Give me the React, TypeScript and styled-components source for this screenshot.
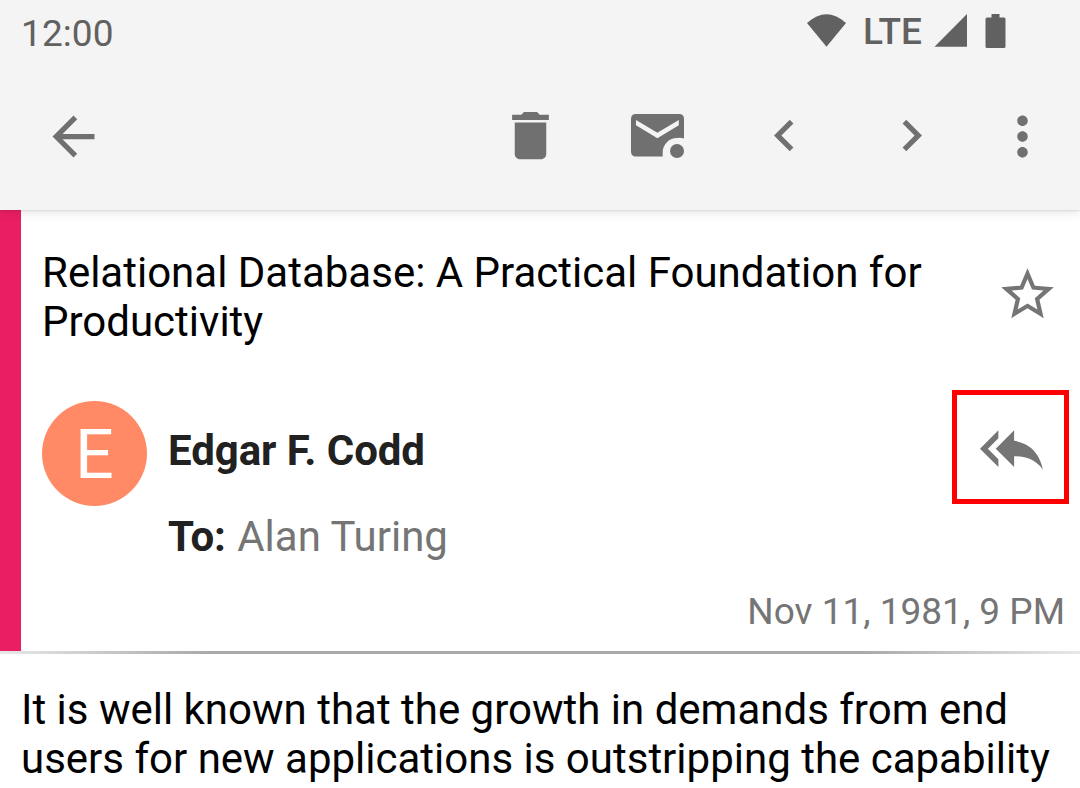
import React from 'react';
import styled, { createGlobalStyle } from 'styled-components';

const GlobalStyle = createGlobalStyle`
  * { box-sizing: border-box; }
  body {
    margin: 0;
    background: #fff;
    font-family: Roboto, 'Liberation Sans', sans-serif;
    font-size: 42px;
    line-height: 49px;
    color: #000;
  }
`;

const Screen = styled.div`
  width: 1080px;
  height: 788px;
  overflow: hidden;
  background: #fff;
`;

const TopBar = styled.header`
  position: relative;
  height: 210px;
  background: #f4f4f4;
  box-shadow: 0 1px 2px rgba(0, 0, 0, 0.1), 0 3px 10px rgba(0, 0, 0, 0.09);
`;

const StatusBar = styled.div`
  display: flex;
  justify-content: space-between;
  height: 63px;
  padding: 0 74px 0 21px;
  font-size: 37px;
  line-height: 43px;
  color: #616161;
`;

const Clock = styled.span`
  padding-top: 12px;
  letter-spacing: 0.1px;
`;

const StatusIcons = styled.div`
  display: flex;
  align-items: flex-start;
  padding-top: 10px;
`;

const Network = styled.span`
  width: 60px;
  margin: 0 11px 0 15px;
  font-weight: 500;
`;

const StatusGlyph = styled.svg<{ $gap?: number }>`
  display: block;
  flex: none;
  margin-top: 3px;
  margin-left: ${({ $gap = 0 }) => $gap}px;
  fill: #616161;
`;

const Toolbar = styled.nav`
  display: flex;
  padding: 42px 26px 0 42px;
`;

const Actions = styled.div`
  display: flex;
  gap: 64px;
  margin-left: auto;
`;

const IconButton = styled.button<{ $pull?: number }>`
  flex: none;
  width: 63px;
  height: 63px;
  padding: 0;
  border: 0;
  margin-left: ${({ $pull = 0 }) => -$pull}px;
  background: none;
  color: #707070;
`;

const Glyph = styled.svg`
  display: block;
  width: 63px;
  height: 63px;
  fill: currentColor;
`;

const MessageHeader = styled.section`
  display: flex;
  flex-direction: column;
  height: 441px;
  border-left: 21px solid #e91e63;
  padding: 38px 0 0 21px;
`;

const SubjectRow = styled.div`
  display: flex;
  justify-content: space-between;
  padding-right: 21px;
`;

const Subject = styled.h1`
  width: 900px;
  margin: 0;
  font-size: 42px;
  font-weight: 400;
  line-height: 49px;
`;

const StarButton = styled(IconButton)`
  margin-top: 15px;
  color: #757575;
`;

const SenderRow = styled.div`
  display: flex;
  margin-top: 44px;
  padding-right: 11px;
`;

const Avatar = styled.div`
  width: 105px;
  height: 105px;
  margin-top: 11px;
  border-radius: 50%;
  background: #ff8a65;
  color: #fff;
  font-size: 68.25px;
  line-height: 108px;
  text-align: center;
`;

const People = styled.div`
  display: flex;
  flex-direction: column;
  gap: 37px;
  margin: 36px auto 0 21px;
  color: #757575;
`;

const Strong = styled.strong`
  font-weight: 700;
  letter-spacing: -0.08px;
  color: #212121;
`;

const Recipient = styled.span`
  margin-left: 1px;
`;

const ReplyAllButton = styled.button`
  display: flex;
  justify-content: center;
  width: 117px;
  height: 114px;
  padding: 22px 0 0 1px;
  border: 5px solid #f00;
  background: none;
  color: #757575;
`;

const Timestamp = styled.time`
  margin: 29px 15px 0 0;
  font-size: 37px;
  line-height: 43px;
  color: #757575;
  text-align: right;
`;

const Divider = styled.div`
  height: 3px;
  background: linear-gradient(90deg, #e8e8e8, #aaa 19%, #aaa 80%, #e8e8e8);
`;

const Body = styled.p`
  margin: 31px 0 0;
  padding: 0 21px;
`;

const Icon = ({ d, dx = 0, dy = 0 }: { d: string; dx?: number; dy?: number }) => (
  <Glyph viewBox="0 0 63 63">
    <path d={d} transform={`translate(${dx} ${dy}) scale(2.625)`} />
  </Glyph>
);

const paths = {
  back: 'M20 11H7.83l5.59-5.59L12 4l-8 8 8 8 1.41-1.41L7.83 13H20v-2z',
  trash:
    'M6 19c0 1.1.9 2 2 2h8c1.1 0 2-.9 2-2V7H6v12zM19 4h-3.5l-1-1h-5l-1 1H5v2h14V4z',
  prev: 'M15.41 7.41L14 6l-6 6 6 6 1.41-1.41L10.83 12z',
  next: 'M10 6L8.59 7.41 13.17 12l-4.58 4.59L10 18l6-6z',
  more: 'M12 8c1.1 0 2-.9 2-2s-.9-2-2-2-2 .9-2 2 .9 2 2 2zm0 2c-1.1 0-2 .9-2 2s.9 2 2 2 2-.9 2-2-.9-2-2-2zm0 6c-1.1 0-2 .9-2 2s.9 2 2 2 2-.9 2-2-.9-2-2-2z',
  star: 'M22 9.24l-7.19-.62L12 2 9.19 8.63 2 9.24l5.46 4.73L5.82 21 12 17.27 18.18 21l-1.63-7.03L22 9.24zM12 15.4l-3.76 2.27 1-4.28-3.32-2.88 4.38-.38L12 6.1l1.71 4.04 4.38.38-3.32 2.88 1 4.28L12 15.4z',
  replyAll:
    'M7 8V5l-7 7 7 7v-3l-4-4 4-4zm6-1V5l-7 7 7 7v-4.1c5 0 8.5 1.6 11 5.1-1-5-4-10-11-11z',
};

const MarkUnreadIcon = () => (
  <Glyph viewBox="0 0 63 63">
    <path d="M10 9H53Q58 9 58 14V33.5Q54.5 32.4 51 33A14.3 14.3 0 0 0 36.7 47.3V51.5H10Q5 51.5 5 46.500V14Q5 9 10 9ZM10 15V20.300L31.400 33.200L52.800 20.300V15L31.400 27.800Z" />
    <circle cx="51" cy="46" r="7" />
  </Glyph>
);

export default function App() {
  return (
    <Screen>
      <GlobalStyle />
      <TopBar>
        <StatusBar>
          <Clock>12:00</Clock>
          <StatusIcons>
            <StatusGlyph width="42" height="36" viewBox="0 0 42 36">
              <path d="M1 10Q20.500 -7.500 40 10L20.500 33.700Z" />
            </StatusGlyph>
            <Network>LTE</Network>
            <StatusGlyph width="34" height="36" viewBox="0 0 34 36">
              <path d="M0.500 33.700L33 1V33.700Z" />
            </StatusGlyph>
            <StatusGlyph $gap={17} width="21" height="36" viewBox="0 0 21 36">
              <path d="M6.500 1H14.500V4.500H19Q20.500 4.500 20.500 6V33.500Q20.500 35 19 35H2Q0.500 35 0.500 33.500V6Q0.500 4.500 2 4.500H6.500Z" />
            </StatusGlyph>
          </StatusIcons>
        </StatusBar>
        <Toolbar>
          <IconButton aria-label="Back">
            <Icon d={paths.back} />
          </IconButton>
          <Actions>
            <IconButton aria-label="Delete">
              <Icon d={paths.trash} dy={-0.8} />
            </IconButton>
            <IconButton aria-label="Mark unread">
              <MarkUnreadIcon />
            </IconButton>
            <IconButton aria-label="Previous">
              <Icon d={paths.prev} dy={-1} />
            </IconButton>
            <IconButton aria-label="Next">
              <Icon d={paths.next} dy={-1} />
            </IconButton>
            <IconButton aria-label="More" $pull={16}>
              <Icon d={paths.more} />
            </IconButton>
          </Actions>
        </Toolbar>
      </TopBar>
      <MessageHeader>
        <SubjectRow>
          <Subject>Relational Database: A Practical Foundation for Productivity</Subject>
          <StarButton aria-label="Star">
            <Icon d={paths.star} />
          </StarButton>
        </SubjectRow>
        <SenderRow>
          <Avatar>E</Avatar>
          <People>
            <Strong>Edgar F. Codd</Strong>
            <span>
              <Strong>To:</Strong> <Recipient>Alan Turing</Recipient>
            </span>
          </People>
          <ReplyAllButton aria-label="Reply all">
            <Icon d={paths.replyAll} dy={0.2} />
          </ReplyAllButton>
        </SenderRow>
        <Timestamp>Nov 11, 1981, 9 PM</Timestamp>
      </MessageHeader>
      <Divider />
      <Body>
        It is well known that the growth in demands from end users for new applications is
        outstripping the capability
      </Body>
    </Screen>
  );
}
